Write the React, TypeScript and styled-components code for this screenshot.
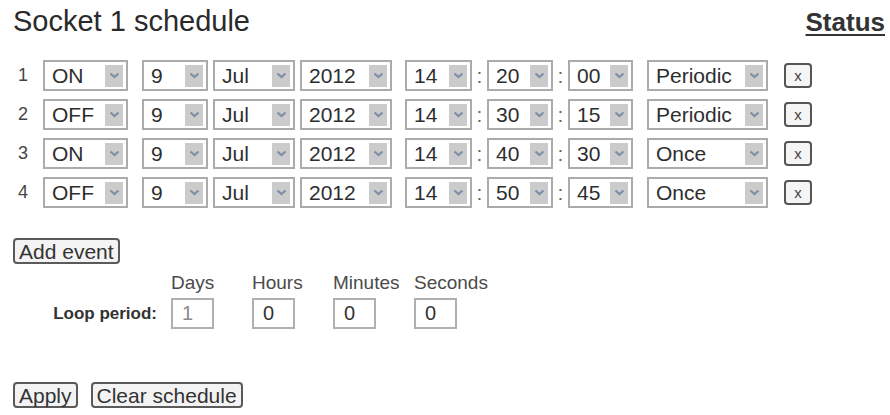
import React from "react";
import styled, { createGlobalStyle } from "styled-components";

const GlobalStyle = createGlobalStyle`
  html, body {
    margin: 0;
    padding: 0;
    background: #ffffff;
    font-family: "Liberation Sans", Arial, sans-serif;
  }
`;

const Page = styled.div`
  padding: 4px 5px 0 13px;
  box-sizing: border-box;
  width: 890px;
  color: #2e2e2e;
`;

const Header = styled.div`
  display: flex;
  justify-content: space-between;
  align-items: baseline;
`;

const Title = styled.h1`
  margin: 0;
  font-size: 29px;
  line-height: 34px;
  font-weight: normal;
  color: #2a2a2a;
`;

const StatusLink = styled.a`
  font-size: 26px;
  font-weight: bold;
  color: #333;
  text-decoration: underline;
  text-decoration-thickness: 2px;
  text-underline-offset: 3px;
`;

const Schedule = styled.div`
  display: flex;
  flex-direction: column;
  gap: 8px;
  margin-top: 22px;
`;

const Row = styled.div`
  display: flex;
  align-items: center;
  height: 31px;
`;

const RowNum = styled.span`
  width: 30px;
  box-sizing: border-box;
  padding-left: 5px;
  font-size: 18px;
  color: #444;
`;

const SelectBox = styled.div<{ $w: number; $lead?: number }>`
  width: ${(p) => p.$w}px;
  height: 31px;
  margin-left: ${(p) => p.$lead ?? 0}px;
  box-sizing: border-box;
  border: 2px solid #ababab;
  background: #fff;
  display: flex;
  align-items: center;
  justify-content: space-between;
  padding: 0 3px 0 7px;
  font-size: 21px;
  color: #2e2e2e;
`;

const Arrow = styled.span`
  width: 18px;
  height: 22px;
  background: #cbcbcb;
  display: flex;
  align-items: center;
  justify-content: center;
`;

const Group = styled.div<{ $lead: number }>`
  display: flex;
  align-items: center;
  gap: 5px;
  margin-left: ${(p) => p.$lead}px;
`;

const TimeGroup = styled.div<{ $lead: number }>`
  display: flex;
  align-items: center;
  margin-left: ${(p) => p.$lead}px;
`;

const Colon = styled.span`
  width: 15px;
  text-align: center;
  font-size: 21px;
  color: #666;
`;

const DeleteBtn = styled.button`
  width: 28px;
  height: 25px;
  margin-left: 16px;
  padding: 0;
  box-sizing: border-box;
  border: 2px solid #555;
  border-radius: 4px;
  background: #f5f5f5;
  font-family: "Liberation Sans", Arial, sans-serif;
  font-size: 15px;
  color: #444;
  line-height: 1;
`;

const Button = styled.button`
  height: 26px;
  box-sizing: border-box;
  padding: 0 4px;
  border: 2px solid #5a5a5a;
  border-radius: 4px;
  background: #f3f3f3;
  font-family: "Liberation Sans", Arial, sans-serif;
  font-size: 21px;
  line-height: 1;
  color: #333;
`;

const AddRow = styled.div`
  margin-top: 30px;
`;

const Loop = styled.div`
  display: grid;
  grid-template-columns: 158px repeat(4, 81px);
  row-gap: 4px;
  margin-top: 8px;
`;

const PeriodLabel = styled.span`
  font-size: 17px;
  font-weight: bold;
  color: #333;
  text-align: right;
  padding-right: 14px;
  align-self: center;
`;

const ColLabel = styled.span`
  font-size: 19px;
  line-height: 22px;
  color: #4a4a4a;
`;

const NumInput = styled.input<{ $dim?: boolean }>`
  width: 43px;
  height: 31px;
  box-sizing: border-box;
  border: 2px solid #b0b0b0;
  padding: 0 0 0 9px;
  font-family: "Liberation Sans", Arial, sans-serif;
  font-size: 20px;
  color: ${(p) => (p.$dim ? "#8a8a8a" : "#333")};
  background: #fff;
  outline: none;
`;

const Actions = styled.div`
  display: flex;
  gap: 13px;
  margin-top: 53px;
`;

const Chevron = () => (
  <svg width="11" height="7" viewBox="0 0 11 7">
    <polyline points="1.5,1.5 5.5,5 9.5,1.5" fill="none" stroke="#7d8ea6" strokeWidth="2.2" />
  </svg>
);

const Select = ({ value, w, lead }: { value: string; w: number; lead?: number }) => (
  <SelectBox $w={w} $lead={lead}>
    <span>{value}</span>
    <Arrow>
      <Chevron />
    </Arrow>
  </SelectBox>
);

const events = [
  { n: 1, state: "ON", h: "14", m: "20", s: "00", mode: "Periodic" },
  { n: 2, state: "OFF", h: "14", m: "30", s: "15", mode: "Periodic" },
  { n: 3, state: "ON", h: "14", m: "40", s: "30", mode: "Once" },
  { n: 4, state: "OFF", h: "14", m: "50", s: "45", mode: "Once" },
];

export default function App() {
  return (
    <>
      <GlobalStyle />
      <Page>
        <Header>
          <Title>Socket 1 schedule</Title>
          <StatusLink href="#">Status</StatusLink>
        </Header>
        <Schedule>
          {events.map((e) => (
            <Row key={e.n}>
              <RowNum>{e.n}</RowNum>
              <Select value={e.state} w={85} />
              <Group $lead={14}>
                <Select value="9" w={66} />
                <Select value="Jul" w={82} />
                <Select value="2012" w={92} />
              </Group>
              <TimeGroup $lead={13}>
                <Select value={e.h} w={67} />
                <Colon>:</Colon>
                <Select value={e.m} w={66} />
                <Colon>:</Colon>
                <Select value={e.s} w={65} />
              </TimeGroup>
              <Select value={e.mode} w={121} lead={14} />
              <DeleteBtn>x</DeleteBtn>
            </Row>
          ))}
        </Schedule>
        <AddRow>
          <Button>Add event</Button>
        </AddRow>
        <Loop>
          <span />
          <ColLabel>Days</ColLabel>
          <ColLabel>Hours</ColLabel>
          <ColLabel>Minutes</ColLabel>
          <ColLabel>Seconds</ColLabel>
          <PeriodLabel>Loop period:</PeriodLabel>
          <NumInput $dim defaultValue="1" />
          <NumInput defaultValue="0" />
          <NumInput defaultValue="0" />
          <NumInput defaultValue="0" />
        </Loop>
        <Actions>
          <Button>Apply</Button>
          <Button>Clear schedule</Button>
        </Actions>
      </Page>
    </>
  );
}
